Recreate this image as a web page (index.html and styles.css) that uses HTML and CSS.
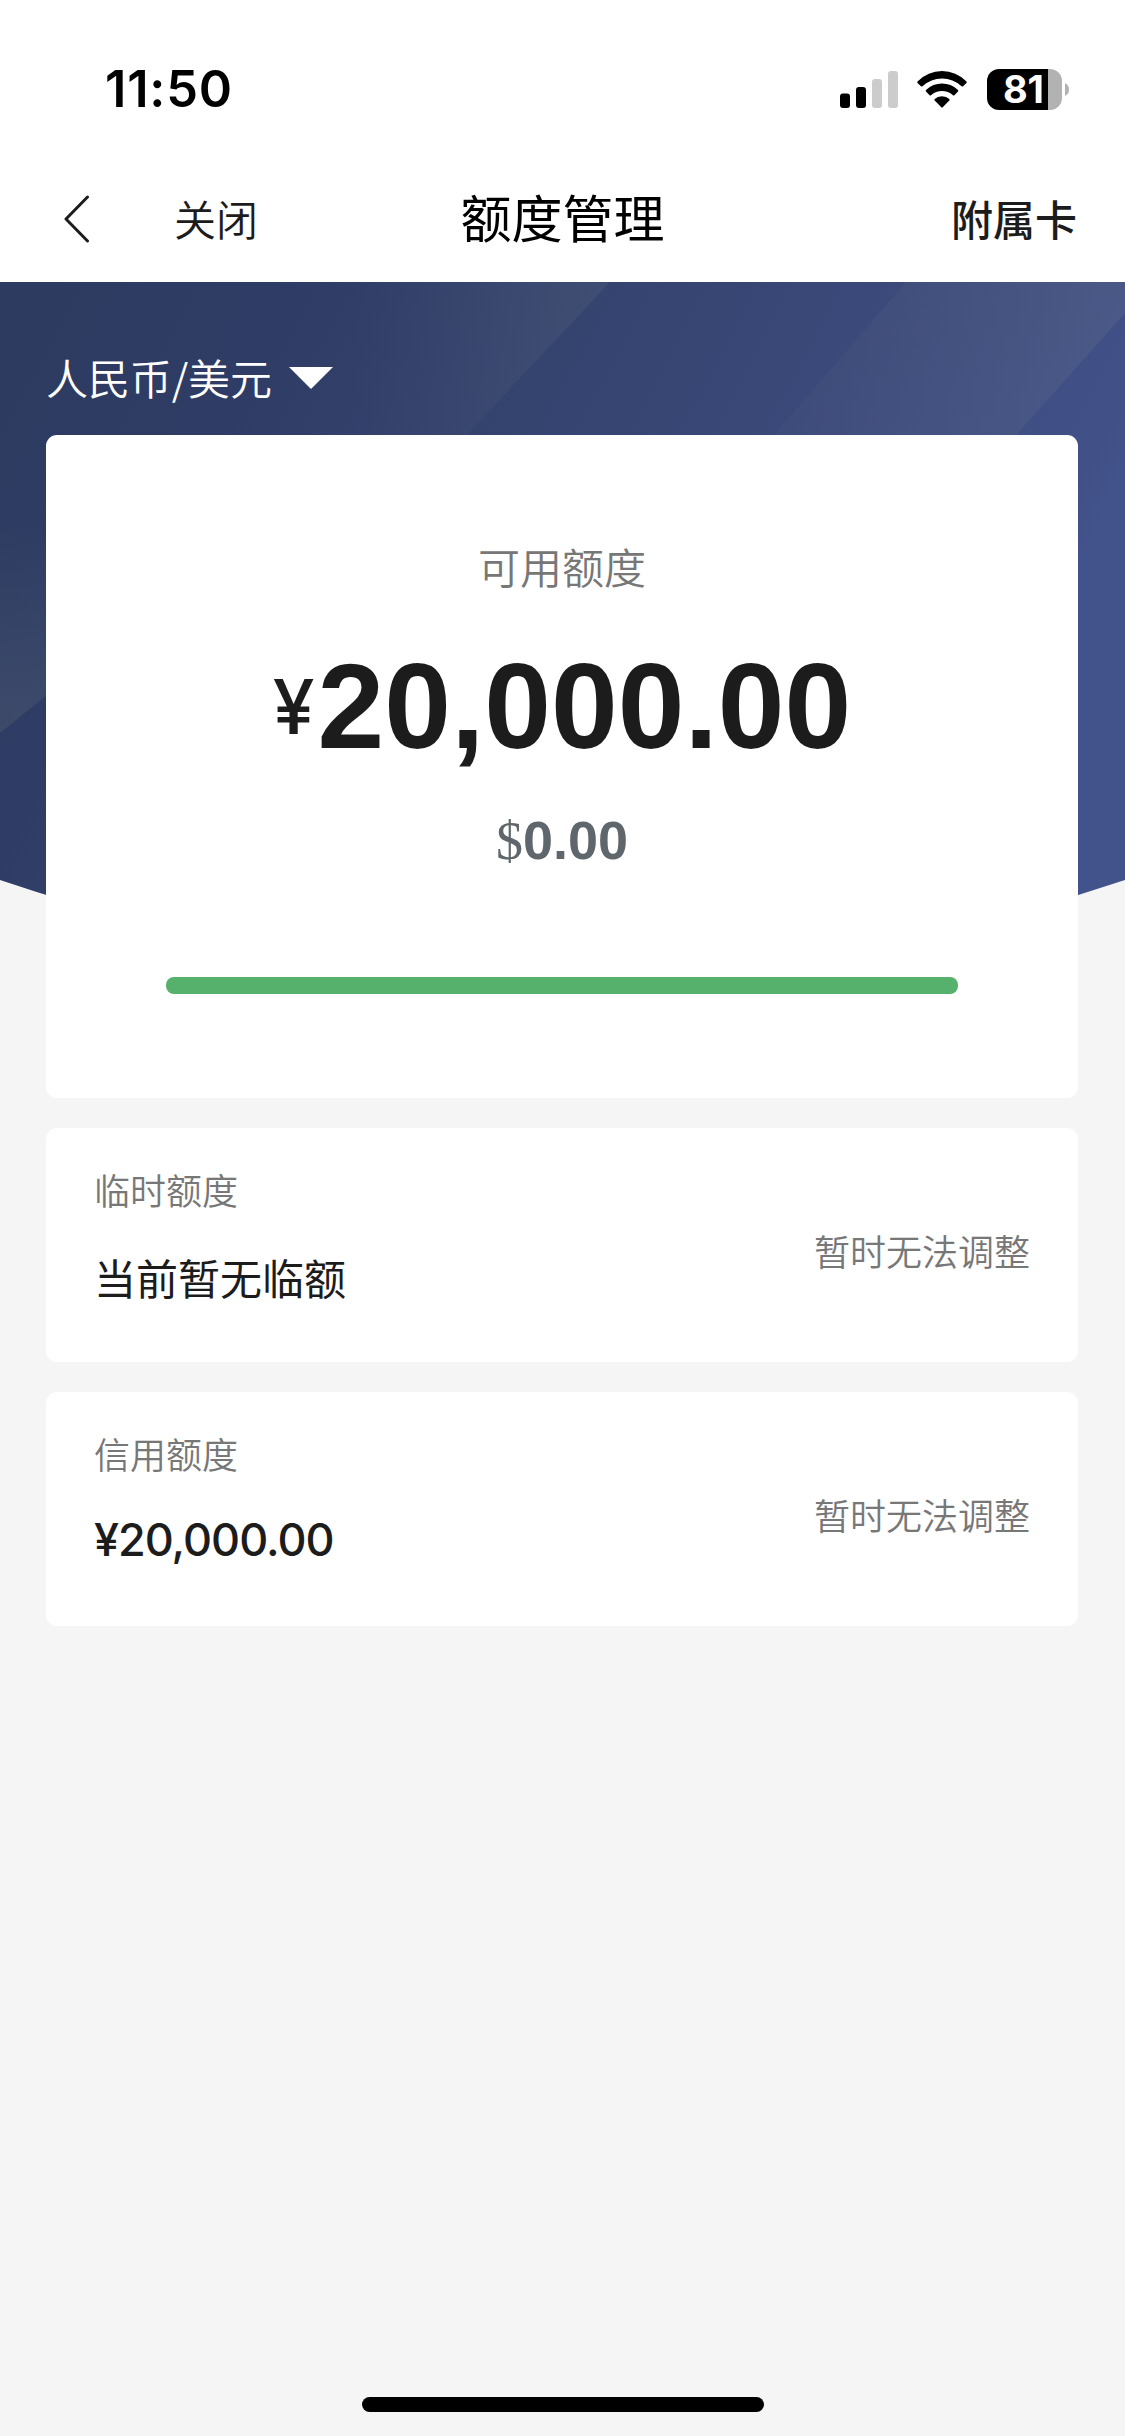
FILE: index.html
```html
<!DOCTYPE html>
<html lang="zh-CN">
<head>
<meta charset="utf-8">
<title>额度管理</title>
<link rel="stylesheet" href="styles.css">
</head>
<body>
<header class="top">
  <div class="status">
    <span class="time">11:50</span>
    <div class="indicators">
      <svg class="signal" width="58" height="37" viewBox="0 0 58 37">
        <rect x="0" y="22.500" width="10" height="14.500" rx="3"/>
        <rect x="16" y="16" width="10" height="21" rx="3"/>
        <rect class="dim" x="32" y="8" width="10" height="29" rx="3"/>
        <rect class="dim" x="48" y="0" width="10" height="37" rx="3"/>
      </svg>
      <svg class="wifi" width="50" height="37" viewBox="0 0 50 37">
        <path d="M0.500 10.500Q11 0 25 0T49.500 10.500Q50 11.300 49.500 12L46 15.300Q45.300 15.800 44.600 15.300Q36 7.500 25 7.500T5.400 15.300Q4.700 15.800 4 15.300L0.500 12Q0 11.300 0.500 10.500Z"/>
        <path d="M9 19Q16 12.600 25 12.600T41 19Q41.600 20 41 20.600L37.400 24.200Q36.700 24.800 36 24.200Q31 20 25 20T14 24.200Q13.300 24.800 12.600 24.200L9 20.600Q8.400 20 9 19Z"/>
        <path d="M17.700 28Q20.500 25.200 25 25.200T32.300 28Q32.900 28.800 32.300 29.600L25.700 36.300Q25 37 24.300 36.300L17.700 29.600Q17.100 28.800 17.700 28Z"/>
      </svg>
      <div class="battery">
        <div class="cell">81</div>
        <svg width="4" height="13" viewBox="0 0 4 13"><path d="M0 0Q4 2 4 6.500T0 13Z"/></svg>
      </div>
    </div>
  </div>
  <nav class="nav">
    <div class="nav-left">
      <svg class="back" width="26" height="48" viewBox="0 0 26 48"><path d="M23.500 2L2 24L23.500 46"/></svg>
      <span>关闭</span>
    </div>
    <h1>额度管理</h1>
    <span class="nav-right">附属卡</span>
  </nav>
</header>
<main class="page">
  <svg class="backdrop" width="1125" height="640" viewBox="0 0 1125 640">
    <defs>
      <linearGradient id="base" x1="0" y1="0" x2="1" y2="0.300">
        <stop offset="0" stop-color="#2d3b60"/>
        <stop offset="0.250" stop-color="#2f3d66"/>
        <stop offset="0.600" stop-color="#384674"/>
        <stop offset="0.850" stop-color="#3e4d81"/>
        <stop offset="1" stop-color="#42528a"/>
      </linearGradient>
      <linearGradient id="ray-left" gradientUnits="userSpaceOnUse" x1="350" y1="0" x2="600" y2="0">
        <stop offset="0" stop-color="#a0a890" stop-opacity="0"/>
        <stop offset="1" stop-color="#a0a890" stop-opacity="0.100"/>
      </linearGradient>
      <linearGradient id="ray-right" gradientUnits="userSpaceOnUse" x1="780" y1="60" x2="1090" y2="60">
        <stop offset="0" stop-color="#a0a890" stop-opacity="0.030"/>
        <stop offset="1" stop-color="#a0a890" stop-opacity="0.100"/>
      </linearGradient>
      <linearGradient id="ray-low" gradientUnits="userSpaceOnUse" x1="0" y1="240" x2="0" y2="430">
        <stop offset="0" stop-color="#a0a890" stop-opacity="0"/>
        <stop offset="1" stop-color="#a0a890" stop-opacity="0.120"/>
      </linearGradient>
      <clipPath id="arc"><path d="M0 598Q562 788 1125 598V0H0Z"/></clipPath>
    </defs>
    <g clip-path="url(#arc)">
      <rect width="1125" height="640" fill="url(#base)"/>
      <path d="M300 0H610L460 160H300Z" fill="url(#ray-left)"/>
      <path d="M906 0H1125V31L1010 160H768Z" fill="url(#ray-right)"/>
      <path d="M0 240H260L0 451Z" fill="url(#ray-low)"/>
    </g>
  </svg>
  <div class="content">
    <div class="currency">
      <span>人民币/美元</span>
      <svg width="44" height="22" viewBox="0 0 44 22"><path d="M0 0H44L22 22Z"/></svg>
    </div>
    <section class="card summary">
      <div class="label">可用额度</div>
      <div class="total"><span class="yen">¥</span><span>20,000.00</span></div>
      <div class="usd"><span class="dollar">$</span><span>0.00</span></div>
      <div class="bar"></div>
    </section>
    <section class="card row">
      <div class="info">
        <span class="name">临时额度</span>
        <span class="value">当前暂无临额</span>
      </div>
      <span class="note">暂时无法调整</span>
    </section>
    <section class="card row">
      <div class="info">
        <span class="name">信用额度</span>
        <span class="value amount">¥20,000.00</span>
      </div>
      <span class="note">暂时无法调整</span>
    </section>
  </div>
</main>
<footer class="home"><div class="home-bar"></div></footer>
</body>
</html>
```
FILE: styles.css
```css
* { box-sizing: border-box; }
body {
  margin: 0;
  width: 1125px;
  height: 2436px;
  display: flex;
  flex-direction: column;
  background: #f5f5f5;
  color: #1c1c1c;
  font-family: "Noto Sans CJK SC", sans-serif;
  font-weight: 350;
  overflow: hidden;
}
svg { display: block; flex: none; }
.top { height: 282px; background: #fff; }
.status {
  height: 176px;
  padding: 2px 56px 0 105px;
  display: flex;
  align-items: center;
  justify-content: space-between;
}
.time { font: 600 50.5px/60px Inter, sans-serif; color: #000; letter-spacing: 0.8px; }
.indicators { display: flex; align-items: center; }
.signal .dim { fill: #ccc; }
.wifi { margin: 0 20px 0 19px; }
.battery { display: flex; align-items: center; gap: 3px; }
.battery svg { fill: #b2b2b2; }
.cell {
  width: 75px;
  height: 41px;
  padding-right: 18px;
  border-radius: 12px;
  background: linear-gradient(90deg, #000 61px, #b2b2b2 61px);
  color: #fff;
  font: 700 38px/40px Inter, sans-serif;
  text-align: right;
}
.nav {
  height: 86px;
  padding: 0 48px;
  display: grid;
  grid-template-columns: 1fr auto 1fr;
  align-items: center;
  font-size: 42px;
  line-height: 60px;
}
.nav-left { padding-left: 16px; display: flex; align-items: center; gap: 84px; }
.nav-left span, .nav-right { padding-bottom: 3px; }
.back { fill: none; stroke: #1c1c1c; stroke-width: 3; stroke-linecap: round; stroke-linejoin: round; }
h1 { margin: 0; padding-bottom: 6px; font-size: 51px; line-height: 70px; font-weight: 400; color: #000; }
.nav-right { text-align: right; font-weight: 500; }
.page { display: grid; }
.backdrop, .content { grid-area: 1 / 1; }
.content { padding: 0 47px 0 46px; display: flex; flex-direction: column; gap: 30px; }
.currency {
  height: 123px;
  padding-top: 65px;
  display: flex;
  align-items: flex-start;
  gap: 17px;
  color: #fff;
  font-size: 42px;
  line-height: 60px;
}
.currency svg { fill: #fff; margin-top: 20px; }
.currency span { letter-spacing: -0.1px; }
.card { background: #fff; border-radius: 11px; }
.summary {
  height: 663px;
  padding: 101px 120px 0;
  display: flex;
  flex-direction: column;
  text-align: center;
}
.label { font-size: 42px; line-height: 60px; color: #777; }
.total {
  margin-top: 40px;
  display: flex;
  justify-content: center;
  font: 700 120px/140px "Liberation Sans", sans-serif;
}
.yen { margin-right: 3px; font: 500 75px/141px Inter, sans-serif; }
.usd { margin-top: 31px; font: 700 54px/64px "Liberation Sans", sans-serif; color: #5f676c; }
.dollar { font-family: "Liberation Serif", serif; font-weight: 400; }
.bar { margin-top: 104px; height: 17px; border-radius: 8px; background: #55b16b; }
.row {
  height: 234px;
  padding: 35px 48px 0;
  display: flex;
  justify-content: space-between;
}
.info { display: flex; flex-direction: column; gap: 32px; }
.name, .note { font-size: 36px; line-height: 52px; color: #777; }
.note { margin-top: 61px; }
.value { font-size: 42px; line-height: 60px; font-weight: 400; }
.amount { font: 500 45px/58px Inter, sans-serif; letter-spacing: -1px; }
.home { margin-top: auto; padding-bottom: 24px; display: flex; justify-content: center; }
.home-bar { width: 402px; height: 15px; border-radius: 8px; background: #000; }
```
